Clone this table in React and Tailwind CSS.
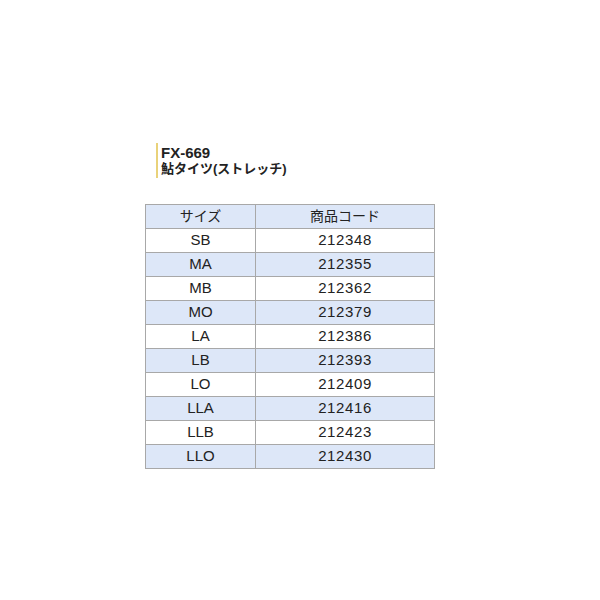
const rows = [
  ['SB', '212348'],
  ['MA', '212355'],
  ['MB', '212362'],
  ['MO', '212379'],
  ['LA', '212386'],
  ['LB', '212393'],
  ['LO', '212409'],
  ['LLA', '212416'],
  ['LLB', '212423'],
  ['LLO', '212430'],
];

export default function App() {
  return (
    <div
      className="w-[600px] h-[600px] bg-white text-black pl-[145px] pt-[143px]"
      style={{ fontFamily: '"Liberation Sans", "Noto Sans CJK JP", sans-serif' }}
    >
      <div className="ml-[11px] border-l-2 border-[#e9d27a] pl-[3px] pt-[2px] pb-px font-bold text-[#222]">
        <div className="text-[15px] leading-[16px]">FX-669</div>
        <div className="text-[13px] leading-[16px]">鮎タイツ(ストレッチ)</div>
      </div>

      <table className="mt-[26px] w-[290px] border-collapse text-[15px] text-[#222]">
        <thead>
          <tr className="h-[24px] bg-[#dde7f8] text-[14px]">
            <th className="w-[110px] border border-[#a8a8a8] font-normal">サイズ</th>
            <th className="border border-[#a8a8a8] font-normal">商品コード</th>
          </tr>
        </thead>
        <tbody>
          {rows.map(([size, code], i) => (
            <tr key={size} className={i % 2 === 1 ? 'h-[24px] bg-[#dde7f8]' : 'h-[24px] bg-white'}>
              <td className="border border-[#a8a8a8] text-center">{size}</td>
              <td className="border border-[#a8a8a8] text-center tracking-[0.6px]">{code}</td>
            </tr>
          ))}
        </tbody>
      </table>
    </div>
  );
}
